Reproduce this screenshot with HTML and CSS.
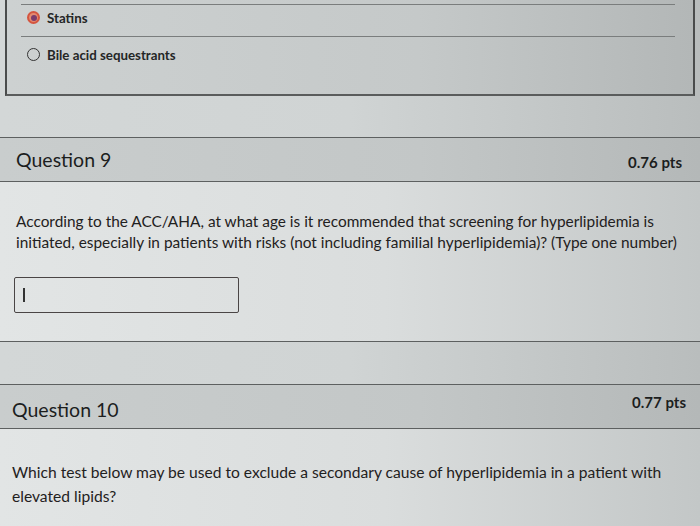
FILE: index.html
```html
<!DOCTYPE html>
<html>
<head>
<meta charset="utf-8">
<link rel="stylesheet" href="styles.css">
</head>
<body>
<div class="page">
  <div class="prev">
    <div class="answer">
      <span class="radio selected"><span class="dot"></span></span>
      <span class="label">Statins</span>
    </div>
    <div class="answer">
      <span class="radio"></span>
      <span class="label">Bile acid sequestrants</span>
    </div>
  </div>

  <div class="question q9">
    <div class="qhead">
      <span class="qtitle">Question 9</span>
      <span class="pts">0.76 pts</span>
    </div>
    <div class="qbody">
      <p class="qtext">According to the ACC/AHA, at what age is it recommended that screening for hyperlipidemia is initiated, especially in patients with risks (not including familial hyperlipidemia)? (Type one number)</p>
      <div class="inputbox"><span class="caret"></span></div>
    </div>
  </div>

  <div class="question q10">
    <div class="qhead">
      <span class="qtitle">Question 10</span>
      <span class="pts">0.77 pts</span>
    </div>
    <div class="qbody">
      <p class="qtext">Which test below may be used to exclude a secondary cause of hyperlipidemia in a patient with elevated lipids?</p>
    </div>
  </div>
</div>
</body>
</html>
```

FILE: styles.css
```css
html, body {
  margin: 0;
  padding: 0;
}
body {
  width: 700px;
  height: 526px;
  overflow: hidden;
  font-family: Lato, "Open Sans", sans-serif;
  color: #1f2121;
  background: linear-gradient(to right, #d3d7d7 0%, #d0d4d4 50%, #b9bdbd 100%);
}
.page {
  display: flex;
  flex-direction: column;
  height: 526px;
  overflow: hidden;
}
.prev {
  margin: 0 5px;
  height: 96px;
  flex: none;
  border-left: 2px solid #4a4c4c;
  border-right: 2px solid #4a4c4c;
  border-bottom: 2px solid #5a5c5c;
  padding: 4px 18px 0 14px;
  box-sizing: border-box;
  background: linear-gradient(to right, #cdd1d1, #c5c9c9 60%, #b3b7b7);
}
.answer {
  display: flex;
  align-items: center;
  gap: 7px;
  height: 32px;
  padding-left: 6px;
  padding-bottom: 6px;
  box-sizing: border-box;
  border-top: 1.5px solid #7a7d7d;
}
.answer + .answer {
  height: 40px;
  padding-bottom: 4px;
}
.radio {
  width: 13px;
  height: 13px;
  box-sizing: border-box;
  border-radius: 50%;
  border: 1.6px solid #333;
  display: flex;
  align-items: center;
  justify-content: center;
}
.radio.selected {
  border: 2px solid #d4553f;
  background: #e48a70;
}
.radio .dot {
  width: 6px;
  height: 6px;
  border-radius: 50%;
  background: #7a3c6c;
}
.label {
  font-size: 13.3px;
  font-weight: 700;
  color: #242626;
}
.question {
  flex: none;
  margin: 41px 0 0 0;
  border-top: 1.5px solid #5d6060;
  border-bottom: 1.5px solid #5d6060;
}
.q10 {
  margin-top: 42px;
  border-bottom: none;
}
.qhead {
  height: 43px;
  display: flex;
  justify-content: space-between;
  align-items: center;
  padding: 0 18px 0 16px;
  border-bottom: 1.5px solid #5d6060;
  background: linear-gradient(to right, #c9cdcd, #c3c7c7 60%, #b4b8b8);
}
.qtitle {
  font-size: 19.5px;
  color: #1c1e1e;
}
.pts {
  font-size: 15px;
  font-weight: 700;
  margin-top: 4px;
  color: #1c1e1e;
}
.q10 .qtitle {
  font-size: 19.5px;
  margin-top: 6px;
}
.q10 .qhead {
  padding-left: 12px;
  padding-right: 14px;
}
.q10 .pts {
  margin-top: -10px;
}
.qbody {
  padding: 29px 8px 28px 16px;
  background: linear-gradient(to right, #e2e5e5, #dadddd 55%, #c3c7c7);
}
.q9 .qtext {
  max-width: 676px;
}
.q10 .qbody {
  padding-left: 12px;
  padding-top: 31px;
  padding-bottom: 40px;
}
.qtext {
  margin: 0;
  font-size: 15.4px;
  line-height: 21px;
  color: #1f2121;
}
.q10 .qtext {
  font-size: 15.6px;
  line-height: 24px;
  max-width: 670px;
}
.inputbox {
  margin-top: 24px;
  margin-left: -2px;
  width: 225px;
  height: 36px;
  box-sizing: border-box;
  border: 1.5px solid #4a4545;
  border-radius: 2px;
  display: flex;
  align-items: center;
  padding-left: 8px;
}
.caret {
  width: 1.5px;
  height: 14px;
  background: #333;
}
```
